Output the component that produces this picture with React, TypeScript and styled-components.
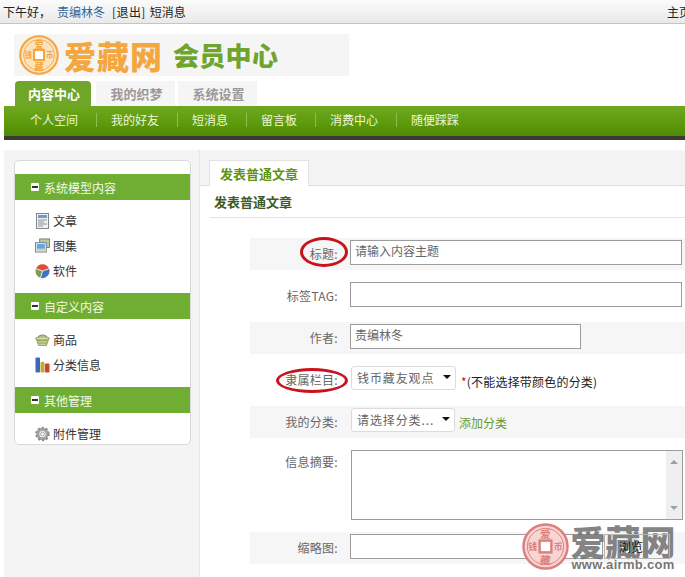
import React from "react";
import styled, { createGlobalStyle } from "styled-components";

const Global = createGlobalStyle`
  html, body {
    margin: 0;
    padding: 0;
    width: 685px;
    height: 577px;
    overflow: hidden;
    background: #fff;
    font-family: "Noto Sans CJK SC", "Liberation Sans", sans-serif;
    font-size: 12px;
    color: #333;
  }
  * { box-sizing: border-box; }
`;

const Page = styled.div`
  position: relative;
  width: 685px;
  height: 577px;
  overflow: hidden;
`;

const TopBar = styled.div`
  height: 24px;
  display: flex;
  align-items: center;
  padding-left: 3px;
  background: linear-gradient(#fbfbfb, #e9e9e9);
  border-bottom: 1px solid #c4c4c4;
  color: #222;
  white-space: nowrap;
`;

const UserLink = styled.a`
  color: #336699;
  margin: 0 7px 0 6px;
`;

const TopAction = styled.span`
  margin-right: 4px;
  letter-spacing: 0.4px;
`;

const TopRight = styled.span`
  margin-left: auto;
  margin-right: -6px;
`;

const Header = styled.div`
  padding: 10px 0 0 14px;
`;

const Logo = styled.div`
  width: 335px;
  height: 42px;
  display: flex;
  align-items: center;
  padding-left: 5px;
  background: #f5f5f5;
`;

const LogoName = styled.span`
  margin-left: 5px;
  color: #f4a640;
  font-size: 32px;
  font-weight: 900;
  line-height: 42px;
  letter-spacing: 1px;
`;

const LogoSub = styled.span`
  margin-left: 10px;
  color: #6fa52f;
  font-size: 26px;
  font-weight: 900;
  line-height: 42px;
  letter-spacing: 0.3px;
`;

const Tabs = styled.div`
  display: flex;
  height: 25px;
  margin: 5px 0 0 1px;
  gap: 5px;
`;

const Tab = styled.div<{ $active?: boolean }>`
  width: ${(p) => (p.$active ? 76 : 79)}px;
  margin-right: ${(p) => (p.$active ? 0 : -2)}px;
  padding-left: 2px;
  display: flex;
  align-items: center;
  justify-content: center;
  font-size: 13px;
  font-weight: 700;
  border-radius: ${(p) => (p.$active ? "4px 4px 0 0" : "0")};
  background: ${(p) => (p.$active ? "#6fa62a" : "#f5f5f5")};
  color: ${(p) => (p.$active ? "#fff" : "#999")};
`;

const Nav = styled.div`
  height: 34px;
  margin-left: 4px;
  display: flex;
  padding: 0 0 2px 12px;
  background: linear-gradient(#6fa820, #5c9a0c 60%, #4f8a06);
  border-bottom: 4px solid #3a3a2e;
  align-items: center;
`;

const NavItem = styled.div`
  padding: 0 18px 0 14px;
  color: #eef6d8;
  line-height: 14px;
  border-right: 1px solid #8cc04a;
  white-space: nowrap;
  &:last-child {
    border-right: 0;
  }
`;

const Content = styled.div`
  display: flex;
  align-items: stretch;
  height: 437px;
  margin: 10px 0 0 4px;
  background: #f4f4f4;
`;

const Sidebar = styled.div`
  width: 195px;
  flex: none;
  padding: 10px 0 0 10px;
`;

const Panel = styled.div`
  width: 177px;
  height: 285px;
  padding-top: 13px;
  overflow: hidden;
  background: #fff;
  border: 1px solid #d9d9d9;
  border-radius: 5px;
`;

const GroupTitle = styled.div`
  height: 26px;
  display: flex;
  align-items: center;
  gap: 5px;
  padding-left: 16px;
  background: #6fae32;
  color: #f4f9ea;
`;

const Minus = styled.span`
  width: 8px;
  height: 8px;
  display: flex;
  align-items: center;
  justify-content: center;
  background: #fff;
  border-radius: 1px;
  &::after {
    content: "";
    width: 6px;
    height: 2px;
    background: #333;
  }
`;

const GroupList = styled.div`
  padding: 8px 0 10px 20px;
`;

const Item = styled.div`
  height: 25px;
  display: flex;
  align-items: center;
  gap: 3px;
  color: #333;
`;

const IconBox = styled.span`
  width: 15px;
  height: 16px;
  flex: none;
  display: flex;
  align-items: center;
  justify-content: center;
`;

const Main = styled.div`
  flex: 1;
  padding-top: 10px;
  border-left: 1px solid #e6e6e6;
`;

const TabBar = styled.div`
  height: 26px;
  padding-left: 9px;
  border-bottom: 1px solid #dcdcdc;
`;

const ActiveTab = styled.div`
  width: 100px;
  height: 26px;
  display: flex;
  align-items: center;
  justify-content: center;
  font-size: 13px;
  font-weight: 700;
  color: #5f9412;
  background: #fff;
  border: 1px solid #e2e2e2;
  border-bottom: 0;
`;

const Sheet = styled.div`
  height: 391px;
  background: #fff;
`;

const SheetTitle = styled.div`
  height: 32px;
  margin-left: 10px;
  padding: 0 0 0 4px;
  display: flex;
  align-items: center;
  font-size: 13px;
  font-weight: 700;
  color: #3e5a26;
  border-bottom: 1px solid #e4e4e4;
`;

const Form = styled.div`
  display: flex;
  flex-direction: column;
  gap: 10px;
  margin: 20px 0 0 50px;
`;

const Row = styled.div<{ $shaded?: boolean; $tall?: boolean }>`
  height: ${(p) => (p.$tall ? 74 : 32)}px;
  display: flex;
  align-items: flex-start;
  background: ${(p) => (p.$shaded ? "#f6f6f6" : "#fff")};
`;

const Label = styled.div<{ $top?: boolean }>`
  position: relative;
  width: 100px;
  height: ${(p) => (p.$top ? "28px" : "32px")};
  flex: none;
  padding: 0 12px 2px 0;
  display: flex;
  align-items: center;
  justify-content: flex-end;
  color: #666;
  letter-spacing: 0.3px;
`;

const Ring = styled.span<{ $wide?: boolean }>`
  position: absolute;
  top: ${(p) => (p.$wide ? 4 : -1)}px;
  left: ${(p) => (p.$wide ? 26 : 50)}px;
  width: ${(p) => (p.$wide ? 72 : 48)}px;
  height: ${(p) => (p.$wide ? 25 : 30)}px;
  border: 3px solid #c8121c;
  border-radius: 50%;
`;

const TextInput = styled.input<{ $width: number }>`
  width: ${(p) => p.$width}px;
  height: 25px;
  margin-top: 2px;
  padding: 0 4px 4px;
  border: 1px solid #9c9c9c;
  background: #fff;
  color: #666;
  font: inherit;
  outline: none;
`;

const SelectBox = styled.div<{ $width: number }>`
  width: ${(p) => p.$width}px;
  height: 24px;
  margin: 2px 0 0 1px;
  padding: 0 4px 2px 5px;
  display: flex;
  align-items: center;
  justify-content: space-between;
  background: #fff;
  border: 1px solid #dcdcdc;
  border-radius: 3px;
  color: #666;
  letter-spacing: 0.9px;
  white-space: nowrap;
  &::after {
    content: "";
    border: 4px solid transparent;
    border-top: 4px solid #111;
    border-bottom: 0;
  }
`;

const Hint = styled.span`
  margin: 10px 0 0 5px;
  color: #222;
  line-height: 16px;
  letter-spacing: 0.2px;
  em {
    color: #c8121c;
    font-style: normal;
  }
`;

const AddLink = styled.a`
  margin: 9px 0 0 4px;
  color: #6a9a1f;
  line-height: 16px;
`;

const TextArea = styled.div`
  width: 332px;
  height: 70px;
  margin: 2px 0 0 1px;
  display: flex;
  justify-content: flex-end;
  border: 1px solid #9c9c9c;
  background: #fff;
`;

const ScrollTrack = styled.div`
  width: 16px;
  display: flex;
  flex-direction: column;
  align-items: center;
  justify-content: space-between;
  padding: 9px 0;
  background: #efefef;
`;

const Arrow = styled.span<{ $down?: boolean }>`
  border: 4px solid transparent;
  border-top: ${(p) => (p.$down ? "4px solid #9aa0a8" : 0)};
  border-bottom: ${(p) => (p.$down ? 0 : "4px solid #9aa0a8")};
`;

// sits above the watermark, the reference shows the label on top of it
const BrowseButton = styled.div`
  position: relative;
  z-index: 1;
  width: 66px;
  height: 25px;
  margin: 2px 0 0 1px;
  padding-left: 14px;
  display: flex;
  align-items: center;
  color: #111;
  border: 1px solid #b4b4b4;
`;

const Watermark = styled.div`
  position: absolute;
  left: 522px;
  top: 523px;
  display: flex;
  gap: 1px;
  pointer-events: none;
`;

const MarkText = styled.div`
  display: flex;
  flex-direction: column;
  align-items: center;
  width: 106px;
`;

const MarkName = styled.span`
  color: rgba(110, 110, 110, 0.85);
  font-size: 35px;
  font-weight: 900;
  line-height: 35px;
`;

const MarkUrl = styled.span`
  color: rgba(100, 100, 100, 0.9);
  font-family: "Liberation Sans", sans-serif;
  font-size: 13px;
  font-weight: 700;
  line-height: 13px;
  letter-spacing: 0.3px;
`;

const Coin = ({ color, size, fill }: { color: string; size: number; fill: string }) => (
  <svg width={size} height={size} viewBox="0 0 48 48">
    <circle cx="24" cy="24" r="22.5" fill={fill} stroke={color} strokeWidth="2.5" />
    <circle cx="24" cy="24" r="18.5" fill="none" stroke={color} strokeWidth="1" />
    <rect x="18" y="18" width="12" height="12" fill="#fff" stroke={color} strokeWidth="2.5" />
    <text x="24" y="15.5" textAnchor="middle" fontSize="11" fontWeight="700" fill={color}>爱</text>
    <text x="24" y="42" textAnchor="middle" fontSize="11" fontWeight="700" fill={color}>藏</text>
    <text x="11" y="28" textAnchor="middle" fontSize="9" fontWeight="700" fill={color}>钱</text>
    <text x="37" y="28" textAnchor="middle" fontSize="9" fontWeight="700" fill={color}>币</text>
  </svg>
);

const DocIcon = () => (
  <svg width="15" height="16" viewBox="0 0 15 16">
    <rect x="1.5" y="0.5" width="12" height="15" fill="#f1f2f2" stroke="#7d8790" />
    <rect x="3" y="2" width="9" height="3" fill="#6d9ccf" />
    <path d="M3 7h9M3 9h6M3 11h9M3 13h5" stroke="#8d9298" />
  </svg>
);

const AlbumIcon = () => (
  <svg width="16" height="15" viewBox="0 0 16 15">
    <rect x="5" y="0.5" width="10.5" height="9" fill="#b9c8a4" stroke="#6f8068" />
    <rect x="0.5" y="4.5" width="11.5" height="10" fill="#e8eef4" stroke="#6d7f92" />
    <rect x="2" y="6" width="8.5" height="5" fill="#5ea6e0" />
    <rect x="2" y="11" width="8.5" height="2" fill="#d8c98c" />
  </svg>
);

const SoftIcon = () => (
  <svg width="16" height="16" viewBox="0 0 16 16">
    <path d="M8 8L1 5.5A7.5 7.5 0 0 0 6 15.3Z" fill="#7f9b57" />
    <path d="M8 8L15 5.5A7.5 7.5 0 0 1 6 15.3Z" fill="#3f74c4" />
    <path d="M8 8L1 5.5A7.5 7.5 0 0 1 15 5.5Z" fill="#d8503a" />
    <path d="M8 8L1 5.5M8 8L15 5.5M8 8L6 15.3" stroke="#fff" strokeWidth="0.8" />
  </svg>
);

const BasketIcon = () => (
  <svg width="16" height="14" viewBox="0 0 16 14">
    <path d="M3 5.5C4 0.5 12 0.5 13 5.5" fill="none" stroke="#8a9a5a" strokeWidth="1.2" />
    <ellipse cx="8" cy="5.5" rx="7.5" ry="2" fill="#cfd9a8" stroke="#8a9a5a" />
    <path d="M1 6.5L3.5 13.5H12.5L15 6.5Z" fill="#97aa62" />
    <path d="M3 9h10M4 11.5h8" stroke="#dce4bd" />
  </svg>
);

const ChartIcon = () => (
  <svg width="15" height="16" viewBox="0 0 15 16">
    <rect x="0.5" y="0.5" width="4.5" height="15" rx="1" fill="#3c69b4" />
    <rect x="5.5" y="5" width="4" height="10.5" rx="1" fill="#c9a43a" />
    <rect x="10" y="6.5" width="4.5" height="9" rx="1" fill="#c2492c" />
  </svg>
);

const GearIcon = () => (
  <svg width="16" height="16" viewBox="0 0 16 16">
    <circle cx="8" cy="8" r="5" fill="none" stroke="#a5a5a5" strokeWidth="3.4" />
    <circle cx="8" cy="8" r="6.6" fill="none" stroke="#8e8e8e" strokeWidth="2.4" strokeDasharray="2.2 2" />
    <circle cx="8" cy="8" r="2" fill="#fff" stroke="#808080" strokeWidth="0.8" />
  </svg>
);

const groups = [
  {
    title: "系统模型内容",
    items: [
      { label: "文章", icon: <DocIcon /> },
      { label: "图集", icon: <AlbumIcon /> },
      { label: "软件", icon: <SoftIcon /> },
    ],
  },
  {
    title: "自定义内容",
    items: [
      { label: "商品", icon: <BasketIcon /> },
      { label: "分类信息", icon: <ChartIcon /> },
    ],
  },
  {
    title: "其他管理",
    items: [{ label: "附件管理", icon: <GearIcon /> }],
  },
];

const navItems = ["个人空间", "我的好友", "短消息", "留言板", "消费中心", "随便踩踩"];

const App = () => {
  return (
    <Page>
      <Global />
      <TopBar>
        下午好，
        <UserLink>责编林冬</UserLink>
        <TopAction>[退出]</TopAction>
        短消息
        <TopRight>主页</TopRight>
      </TopBar>

      <Header>
        <Logo>
          <Coin color="#f4a640" fill="#fbe3bd" size={40} />
          <LogoName>爱藏网</LogoName>
          <LogoSub>会员中心</LogoSub>
        </Logo>
        <Tabs>
          <Tab $active>内容中心</Tab>
          <Tab>我的织梦</Tab>
          <Tab>系统设置</Tab>
        </Tabs>
      </Header>
      <Nav>
        {navItems.map((name) => (
          <NavItem key={name}>{name}</NavItem>
        ))}
      </Nav>

      <Content>
        <Sidebar>
          <Panel>
            {groups.map((group) => (
              <div key={group.title}>
                <GroupTitle>
                  <Minus />
                  {group.title}
                </GroupTitle>
                <GroupList>
                  {group.items.map((item) => (
                    <Item key={item.label}>
                      <IconBox>{item.icon}</IconBox>
                      {item.label}
                    </Item>
                  ))}
                </GroupList>
              </div>
            ))}
          </Panel>
        </Sidebar>

        <Main>
          <TabBar>
            <ActiveTab>发表普通文章</ActiveTab>
          </TabBar>
          <Sheet>
            <SheetTitle>发表普通文章</SheetTitle>
            <Form>
              <Row $shaded>
                <Label>
                  标题:
                  <Ring />
                </Label>
                <TextInput $width={332} defaultValue="请输入内容主题" />
              </Row>
              <Row>
                <Label>标签TAG:</Label>
                <TextInput $width={332} />
              </Row>
              <Row $shaded>
                <Label>作者:</Label>
                <TextInput $width={231} defaultValue="责编林冬" />
              </Row>
              <Row>
                <Label>
                  隶属栏目:
                  <Ring $wide />
                </Label>
                <SelectBox $width={105}>钱币藏友观点</SelectBox>
                <Hint>
                  <em>*</em>(不能选择带颜色的分类)
                </Hint>
              </Row>
              <Row $shaded>
                <Label>我的分类:</Label>
                <SelectBox $width={104}>请选择分类...</SelectBox>
                <AddLink>添加分类</AddLink>
              </Row>
              <Row $tall>
                <Label $top>信息摘要:</Label>
                <TextArea>
                  <ScrollTrack>
                    <Arrow />
                    <Arrow $down />
                  </ScrollTrack>
                </TextArea>
              </Row>
              <Row $shaded>
                <Label>缩略图:</Label>
                <TextInput $width={253} />
                <BrowseButton>浏览</BrowseButton>
              </Row>
            </Form>
          </Sheet>
        </Main>
      </Content>

      <Watermark>
        <Coin color="#dd7f7f" fill="#f6d5d2" size={47} />
        <MarkText>
          <MarkName>爱藏网</MarkName>
          <MarkUrl>www.airmb.com</MarkUrl>
        </MarkText>
      </Watermark>
    </Page>
  );
};

export default App;
